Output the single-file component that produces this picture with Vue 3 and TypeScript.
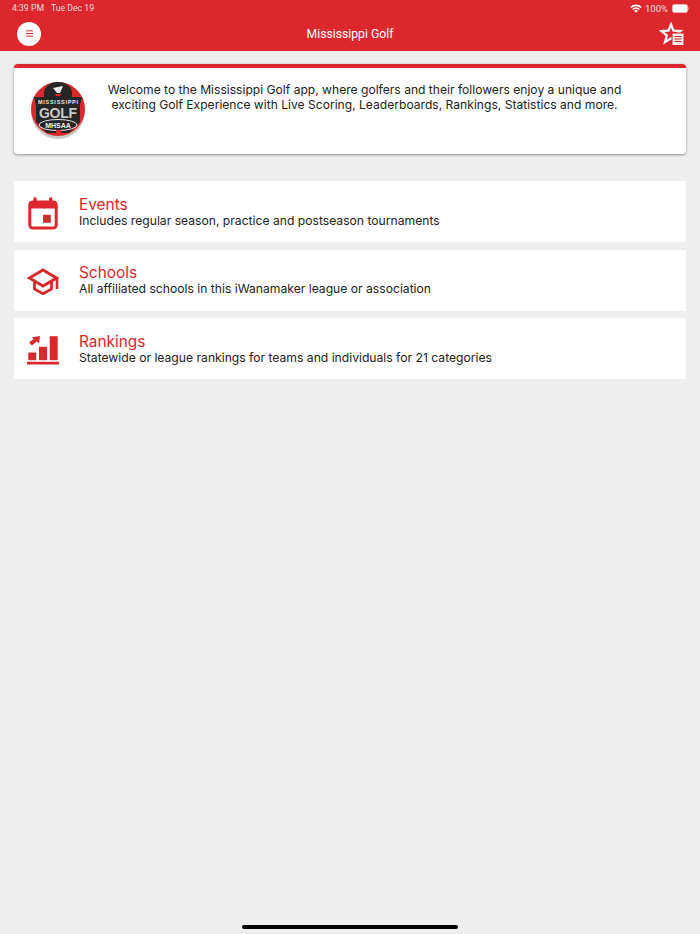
<script setup lang="ts">
interface MenuItem {
  name: string;
  title: string;
  text: string;
}

const items: MenuItem[] = [
  { name: 'events', title: 'Events', text: 'Includes regular season, practice and postseason tournaments' },
  { name: 'schools', title: 'Schools', text: 'All affiliated schools in this iWanamaker league or association' },
  { name: 'rankings', title: 'Rankings', text: 'Statewide or league rankings for teams and individuals for 21 categories' }
];
</script>

<template>
  <div class="page">
    <header class="header">
      <div class="status">
        <span class="time">4:39 PM</span>
        <span class="date">Tue Dec 19</span>
        <span class="spacer"></span>
        <svg class="wifi" viewBox="0 0 12 9" width="12" height="9">
          <path d="M0.3 3 A8 8 0 0 1 11.7 3 L10.6 4.1 A6.5 6.5 0 0 0 1.4 4.1 Z" fill="#fff" />
          <path d="M2.2 4.9 A5.4 5.4 0 0 1 9.8 4.9 L8.7 6 A3.9 3.9 0 0 0 3.3 6 Z" fill="#fff" />
          <path d="M4.1 6.8 A2.7 2.7 0 0 1 7.9 6.8 L6 8.8 Z" fill="#fff" />
        </svg>
        <span class="percent">100%</span>
        <svg class="battery" viewBox="0 0 18 9" width="18" height="9">
          <rect x="0.5" y="0.5" width="15" height="8" rx="2" fill="#fff" stroke="#f3b5b8" />
          <path d="M16.5 3 C17.4 3.3 17.4 5.7 16.5 6 Z" fill="#f3b5b8" />
        </svg>
      </div>
      <div class="bar">
        <button class="menu-btn">
          <svg viewBox="0 0 10 8" width="9" height="7">
            <path d="M1 1H9M1 4H9M1 7H9" stroke="#dc272d" stroke-width="1.1" fill="none" />
          </svg>
        </button>
        <h1 class="bar-title">Mississippi Golf</h1>
        <svg class="star" viewBox="0 0 26 26" width="26" height="26">
          <path d="M12 3.5 L14.5 9.6 L21.5 10 L16.2 14.3 L18 21.2 L12 17.4 L6 21.2 L7.8 14.3 L2.5 10 L9.5 9.6 Z" fill="none" stroke="#fff" stroke-width="2.2" stroke-linejoin="miter" />
          <rect x="12.5" y="11.5" width="13" height="13" fill="#dc272d" />
          <rect x="13.5" y="12.5" width="11" height="11.5" fill="#fff" opacity="0.9" />
          <path d="M15.5 15.5H22.5M15.5 18H22.5M15.5 20.5H22.5" stroke="#dc272d" stroke-width="1.1" />
        </svg>
      </div>
    </header>

    <main class="content">
      <section class="welcome">
        <svg class="logo" viewBox="0 0 54 60" width="54" height="60">
          <circle cx="27" cy="31" r="27" fill="#c9c9c9" />
          <circle cx="27" cy="28" r="27" fill="#dc272d" />
          <path d="M13 17 V12 A14 11 0 0 1 41 12 V17 Z" fill="#262626" />
          <path d="M22 7 L32 5 L29 12 L26 12 Z" fill="#eee" />
          <path d="M24 13 H30 L29 15 H25 Z" fill="#dc272d" />
          <path d="M3 16 H51 L49 24 V41 L38 52 H16 L5 41 V24 Z" fill="#262626" />
          <text x="27" y="22.5" class="logo-small" text-anchor="middle" textLength="40">MISSISSIPPI</text>
          <text x="27" y="37" class="logo-golf" text-anchor="middle" textLength="38">GOLF</text>
          <ellipse cx="27" cy="44" rx="19" ry="5.5" fill="#262626" stroke="#e8e8e8" stroke-width="1" />
          <text x="27" y="46.5" class="logo-misaa" text-anchor="middle">MHSAA</text>
          <path d="M25 49 H30 V52 H25 Z" fill="#dc272d" />
        </svg>
        <p class="welcome-text">Welcome to the Mississippi Golf app, where golfers and their followers enjoy a unique and<br />exciting Golf Experience with Live Scoring, Leaderboards, Rankings, Statistics and more.</p>
      </section>

      <ul class="list">
        <li v-for="item in items" :key="item.name" class="row">
          <div class="row-icon">
            <svg v-if="item.name === 'events'" viewBox="0 0 32 36" width="32" height="36">
              <path d="M8 3.5V8M23.7 3.5V8" stroke="#dc272d" stroke-width="3.3" />
              <rect x="2.8" y="8" width="26.4" height="26" rx="3" fill="none" stroke="#dc272d" stroke-width="3" />
              <rect x="2.8" y="7" width="26.4" height="7.5" fill="#dc272d" />
              <rect x="16" y="20.8" width="7.8" height="8" fill="#dc272d" />
            </svg>
            <svg v-else-if="item.name === 'schools'" viewBox="0 0 32 30" width="32" height="30">
              <path d="M2.5 13 L16 5 L29.5 13 L16 21 Z" fill="none" stroke="#dc272d" stroke-width="2.8" />
              <path d="M7.5 17 V24 L16 28.8 L24.5 24 V17" fill="none" stroke="#dc272d" stroke-width="2.8" />
              <path d="M30 12 V24" stroke="#dc272d" stroke-width="2.6" />
            </svg>
            <svg v-else viewBox="0 0 32 32" width="32" height="32">
              <rect x="1.3" y="19.5" width="8" height="7.7" fill="#dc272d" />
              <rect x="12" y="13.8" width="8" height="13.4" fill="#dc272d" />
              <rect x="22.7" y="3.2" width="8" height="24" fill="#dc272d" />
              <rect x="0" y="28.8" width="32" height="2.7" fill="#dc272d" />
              <path d="M13 3 L12 10.5 L9.7 8.5 L5 12.5 L2 9.5 L6.7 6 L5 4.2 Z" fill="#dc272d" />
            </svg>
          </div>
          <div class="row-body">
            <h2 class="row-title">{{ item.title }}</h2>
            <p class="row-text">{{ item.text }}</p>
          </div>
        </li>
      </ul>
    </main>

    <div class="home-indicator"></div>
  </div>
</template>

<style scoped>
.page {
  display: flex;
  flex-direction: column;
  height: 934px;
  background: #eeeeee;
  font-family: Inter, "Liberation Sans", sans-serif;
  overflow: hidden;
}

.header {
  height: 51px;
  background: #dc272d;
  color: #fff;
  flex-shrink: 0;
}

.status {
  display: flex;
  align-items: center;
  height: 16px;
  padding: 0 10px 0 12px;
  font-size: 8.7px;
  color: #f8dcdd;
  font-family: Roboto, sans-serif;
}

.date {
  margin-left: 7px;
}

.spacer {
  flex: 1;
}

.wifi {
  margin-right: 3px;
}

.percent {
  font-size: 9.5px;
  margin-right: 4px;
}

.bar {
  display: flex;
  align-items: center;
  justify-content: space-between;
  height: 35px;
  padding: 0 15px 0 17px;
}

.menu-btn {
  display: flex;
  align-items: center;
  justify-content: center;
  width: 24px;
  height: 24px;
  padding: 0;
  border: none;
  border-radius: 50%;
  background: #fff;
}

.bar-title {
  flex: 1;
  margin: 0;
  text-align: center;
  font-size: 12.2px;
  font-weight: 400;
  font-family: Roboto, sans-serif;
  color: #fff;
}

.content {
  padding: 13px 14px 0;
}

.welcome {
  display: flex;
  height: 90px;
  box-sizing: border-box;
  padding: 13px 49px 0 17px;
  background: #fff;
  border-top: 4px solid #dc272d;
  border-radius: 4px;
  box-shadow: 0 1px 3px rgba(0, 0, 0, 0.4);
}

.logo {
  flex-shrink: 0;
}

.logo-small {
  font: 700 5.5px "Liberation Sans", sans-serif;
  fill: #e8e8e8;
}

.logo-golf {
  font: 700 14px "Liberation Sans", sans-serif;
  fill: #c8c8c8;
}

.logo-misaa {
  font: 700 7px "Liberation Sans", sans-serif;
  fill: #f2f2f2;
}

.welcome-text {
  flex: 1;
  margin: 0;
  padding: 1px 0 0 7px;
  text-align: center;
  font-size: 12.1px;
  line-height: 15px;
  color: #222;
}

.list {
  display: flex;
  flex-direction: column;
  gap: 7.5px;
  margin: 27px 0 0;
  padding: 0;
  list-style: none;
}

.row {
  display: flex;
  align-items: center;
  height: 61px;
  background: #fff;
}

.row-icon {
  display: flex;
  align-items: center;
  justify-content: center;
  width: 32px;
  margin-left: 13px;
  flex-shrink: 0;
}

.row-body {
  margin-left: 20px;
}

.row-title {
  margin: 0;
  font-size: 15.4px;
  line-height: 17px;
  font-weight: 400;
  color: #dc272d;
}

.row-text {
  margin: 0;
  font-size: 12.15px;
  line-height: 15px;
  color: #222;
}

.home-indicator {
  width: 216px;
  height: 4px;
  margin: auto auto 5px;
  background: #000;
  border-radius: 2px;
  flex-shrink: 0;
}
</style>
